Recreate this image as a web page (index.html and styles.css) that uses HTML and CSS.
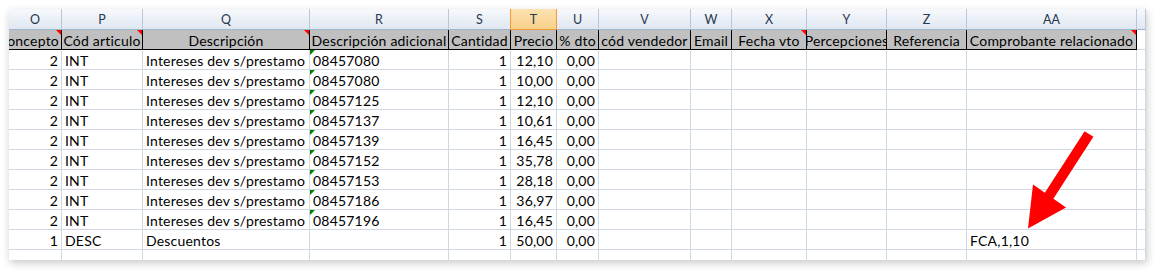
FILE: index.html
```html
<!DOCTYPE html>
<html lang="es">
<head>
<meta charset="utf-8">
<title>Hoja</title>
<link rel="stylesheet" href="styles.css">
</head>
<body>
<div class="stage">
  <div class="card">
    <div class="sheet">
      <div class="h">O</div><div class="h">P</div><div class="h">Q</div><div class="h">R</div><div class="h pre">S</div><div class="h sel">T</div><div class="h">U</div><div class="h">V</div><div class="h">W</div><div class="h">X</div><div class="h">Y</div><div class="h">Z</div><div class="h">AA</div><div class="h"></div>

      <div class="n r cmt">Concepto</div><div class="n cmt">Cód articulo</div><div class="n cmt">Descripción</div><div class="n">Descripción adicional</div><div class="n">Cantidad</div><div class="n">Precio</div><div class="n">% dto</div><div class="n">cód vendedor</div><div class="n">Email</div><div class="n cmt">Fecha vto</div><div class="n">Percepciones</div><div class="n">Referencia</div><div class="n cmt">Comprobante relacionado</div><div class="c"></div>

      <div class="c r">2</div><div class="c">INT</div><div class="c">Intereses dev s/prestamo</div><div class="c txt">08457080</div><div class="c r">1</div><div class="c r">12,10</div><div class="c r">0,00</div><div class="c"></div><div class="c"></div><div class="c"></div><div class="c"></div><div class="c"></div><div class="c"></div><div class="c"></div>
      <div class="c r">2</div><div class="c">INT</div><div class="c">Intereses dev s/prestamo</div><div class="c txt">08457080</div><div class="c r">1</div><div class="c r">10,00</div><div class="c r">0,00</div><div class="c"></div><div class="c"></div><div class="c"></div><div class="c"></div><div class="c"></div><div class="c"></div><div class="c"></div>
      <div class="c r">2</div><div class="c">INT</div><div class="c">Intereses dev s/prestamo</div><div class="c txt">08457125</div><div class="c r">1</div><div class="c r">12,10</div><div class="c r">0,00</div><div class="c"></div><div class="c"></div><div class="c"></div><div class="c"></div><div class="c"></div><div class="c"></div><div class="c"></div>
      <div class="c r">2</div><div class="c">INT</div><div class="c">Intereses dev s/prestamo</div><div class="c txt">08457137</div><div class="c r">1</div><div class="c r">10,61</div><div class="c r">0,00</div><div class="c"></div><div class="c"></div><div class="c"></div><div class="c"></div><div class="c"></div><div class="c"></div><div class="c"></div>
      <div class="c r">2</div><div class="c">INT</div><div class="c">Intereses dev s/prestamo</div><div class="c txt">08457139</div><div class="c r">1</div><div class="c r">16,45</div><div class="c r">0,00</div><div class="c"></div><div class="c"></div><div class="c"></div><div class="c"></div><div class="c"></div><div class="c"></div><div class="c"></div>
      <div class="c r">2</div><div class="c">INT</div><div class="c">Intereses dev s/prestamo</div><div class="c txt">08457152</div><div class="c r">1</div><div class="c r">35,78</div><div class="c r">0,00</div><div class="c"></div><div class="c"></div><div class="c"></div><div class="c"></div><div class="c"></div><div class="c"></div><div class="c"></div>
      <div class="c r">2</div><div class="c">INT</div><div class="c">Intereses dev s/prestamo</div><div class="c txt">08457153</div><div class="c r">1</div><div class="c r">28,18</div><div class="c r">0,00</div><div class="c"></div><div class="c"></div><div class="c"></div><div class="c"></div><div class="c"></div><div class="c"></div><div class="c"></div>
      <div class="c r">2</div><div class="c">INT</div><div class="c">Intereses dev s/prestamo</div><div class="c txt">08457186</div><div class="c r">1</div><div class="c r">36,97</div><div class="c r">0,00</div><div class="c"></div><div class="c"></div><div class="c"></div><div class="c"></div><div class="c"></div><div class="c"></div><div class="c"></div>
      <div class="c r">2</div><div class="c">INT</div><div class="c">Intereses dev s/prestamo</div><div class="c txt">08457196</div><div class="c r">1</div><div class="c r">16,45</div><div class="c r">0,00</div><div class="c"></div><div class="c"></div><div class="c"></div><div class="c"></div><div class="c"></div><div class="c"></div><div class="c"></div>
      <div class="c r">1</div><div class="c">DESC</div><div class="c">Descuentos</div><div class="c"></div><div class="c r">1</div><div class="c r">50,00</div><div class="c r">0,00</div><div class="c"></div><div class="c"></div><div class="c"></div><div class="c"></div><div class="c"></div><div class="c">FCA,1,10</div><div class="c"></div>
      <div class="c"></div><div class="c"></div><div class="c"></div><div class="c"></div><div class="c"></div><div class="c"></div><div class="c"></div><div class="c"></div><div class="c"></div><div class="c"></div><div class="c"></div><div class="c"></div><div class="c"></div><div class="c"></div>
    </div>
  </div>
  <svg class="arrow" width="80" height="110" viewBox="1020 128 80 110" aria-hidden="true">
    <line x1="1089" y1="134" x2="1047" y2="199" stroke="#ff0000" stroke-width="10.5"/>
    <polygon points="1033,184.5 1066,207.5 1028,228.5" fill="#ff0000"/>
  </svg>
</div>
</body>
</html>
```

FILE: styles.css
```css
html, body {
  margin: 0;
  padding: 0;
  background: #ffffff;
}

.stage {
  position: relative;
  width: 1161px;
  height: 275px;
  padding: 9px 0 0 9px;
  box-sizing: border-box;
}

.card {
  width: 1137px;
  height: 251px;
  overflow: hidden;
  background: #ffffff;
  box-shadow: 1px 3px 8px rgba(0, 0, 0, 0.22);
}

.sheet {
  display: grid;
  grid-template-columns: 53px 81px 167px 139px 62px 46px 42px 92px 41px 75px 80px 80px 170px 9px;
  grid-template-rows: 21px 20px;
  grid-auto-rows: 20px;
  font-family: Lato, "Liberation Sans", sans-serif;
  font-size: 14px;
  letter-spacing: 0.2px;
  color: #000000;
}

.sheet > div {
  box-sizing: border-box;
  display: flex;
  align-items: center;
  white-space: nowrap;
  overflow: hidden;
  position: relative;
  min-width: 0;
}

.h {
  justify-content: center;
  background: linear-gradient(#f7f9fc, #dfe7f1);
  border-right: 1px solid #b9c9dc;
  border-bottom: 1px solid #9eb6ce;
  font-size: 12.5px;
  letter-spacing: 0;
  color: #27384f;
  padding-top: 1px;
}

.h.pre {
  border-right-color: #f29b36;
}

.h.sel {
  background: linear-gradient(#fbe2b0, #f8d08a);
  border-right-color: #f29b36;
  border-bottom-color: #f29b36;
}

.n {
  justify-content: center;
  background: #c0c0c0;
  border-right: 1px solid #000000;
  border-bottom: 1px solid #000000;
  padding: 1px 2px 0;
}

.c {
  border-right: 1px solid #d0d7e5;
  border-bottom: 1px solid #d0d7e5;
  padding: 1px 3px 0;
}

.r {
  justify-content: flex-end;
}

.cmt::after {
  content: "";
  position: absolute;
  top: 0;
  right: 0;
  border-top: 5px solid #ff0000;
  border-left: 5px solid transparent;
}

.txt::before {
  content: "";
  position: absolute;
  top: 0;
  left: 0;
  border-top: 5px solid #008000;
  border-right: 5px solid transparent;
}

.arrow {
  position: absolute;
  left: 1020px;
  top: 128px;
}
```
